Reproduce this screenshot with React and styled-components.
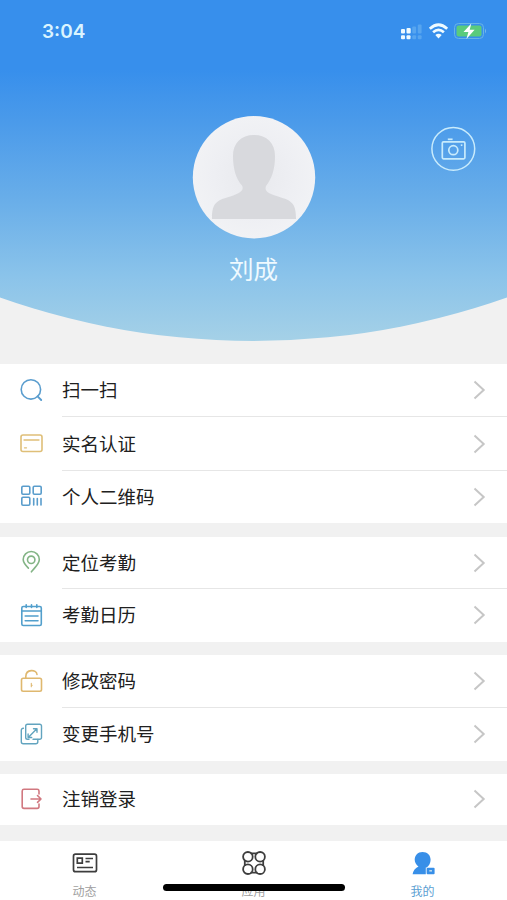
import React from "react";
import styled, { createGlobalStyle } from "styled-components";

const GlobalStyle = createGlobalStyle`
  * { box-sizing: border-box; }
  body {
    margin: 0;
    background: #f1f1f1;
    font-family: "Noto Sans CJK SC", "Noto Sans", sans-serif;
  }
`;

const Screen = styled.div`
  position: relative;
  display: flex;
  flex-direction: column;
  width: 507px;
  height: 900px;
  overflow: hidden;
  background: #f1f1f1;
`;

const Header = styled.header`
  position: relative;
  display: flex;
  flex-direction: column;
  align-items: center;
  height: 341px;
  flex: none;
  background: linear-gradient(#378fec 0, #378fec 70px, #4a9aea 120px, #69aee9 200px, #8ac3ea 275px, #a5d1e7 341px);
  clip-path: circle(760px at 50% -419px);
`;

const StatusBar = styled.div`
  display: flex;
  align-self: stretch;
  justify-content: space-between;
  align-items: center;
  height: 62px;
  padding: 0 20px 0 42px;
`;

const Time = styled.span`
  padding-top: 2px;
  font: 600 19px/24px Inter, sans-serif;
  letter-spacing: 0;
  color: #daf4ff;
`;

const StatusIcons = styled.svg`
  display: block;
  width: 86px;
  height: 20px;
`;

const Avatar = styled.svg`
  display: block;
  width: 124px;
  height: 124px;
  margin-top: 53px;
`;

const UserName = styled.div`
  margin-top: 13px;
  font-size: 24.5px;
  line-height: 34px;
  color: #effaff;
`;

const CameraButton = styled.button`
  position: absolute;
  top: 126px;
  right: 31px;
  width: 45px;
  height: 45px;
  padding: 0;
  border: 0;
  background: none;
  color: #c8ebfc;
  svg { display: block; }
`;

const Menu = styled.main`
  display: flex;
  flex-direction: column;
  gap: 13px;
  margin-top: 23px;
`;

const Group = styled.section`
  background: #fff;
  margin-bottom: ${(p) => p.$after || 0}px;
`;

const Row = styled.div`
  display: flex;
  align-items: center;
  height: ${(p) => p.$height || 53}px;
  padding-left: 19px;
`;

const RowIcon = styled.svg`
  width: 25px;
  height: 26px;
  flex: none;
  margin: 0 18px 2px 0;
  fill: none;
  stroke: ${(p) => p.$color};
  stroke-width: 1.6;
  stroke-linecap: round;
  stroke-linejoin: round;
`;

const RowBody = styled.div`
  display: flex;
  flex: 1;
  align-items: center;
  justify-content: space-between;
  align-self: stretch;
  padding-right: 21px;
  border-bottom: 1px solid ${(p) => (p.$last ? "transparent" : "#e6e6e6")};
`;

const Label = styled.span`
  padding-bottom: 2px;
  font-size: 18.5px;
  line-height: 26px;
  color: #202020;
`;

const Chevron = styled.svg`
  width: 13px;
  height: 20px;
  fill: none;
  stroke: #c6c6c6;
  stroke-width: 2;
`;

const TabBar = styled.nav`
  display: grid;
  grid-template-columns: repeat(3, 1fr);
  height: 59px;
  margin-top: auto;
  flex: none;
  background: #fff;
`;

const Tab = styled.div`
  display: flex;
  flex-direction: column;
  align-items: center;
  padding-top: 8px;
  color: ${(p) => (p.$active ? "#388fe8" : "#3d3d3d")};
  svg { display: block; width: 28px; height: 28px; }
`;

const TabLabel = styled.span`
  margin-top: 5px;
  font-size: 12px;
  line-height: 18px;
  color: ${(p) => (p.$active ? "#5ba0d2" : "#a0a0a0")};
`;

const HomeIndicator = styled.div`
  position: absolute;
  left: 163px;
  top: 884px;
  width: 182px;
  height: 7px;
  border-radius: 4px;
  background: #000;
`;

const icons = {
  search: (
    <>
      <circle cx="11.9" cy="12.4" r="9.7" />
      <path d="M18.6 19.3L22.2 23" strokeWidth="1.9" />
    </>
  ),
  card: (
    <>
      <rect x="2" y="5" width="21" height="16.5" rx="2" />
      <path d="M5 10H20M5.5 17.8H7.5" strokeWidth="1.3" />
    </>
  ),
  qr: (
    <>
      <rect x="2.8" y="3.3" width="8" height="8" rx="1.2" />
      <rect x="14.2" y="3.3" width="8" height="8" rx="1.2" />
      <rect x="2.8" y="14.3" width="8" height="8" rx="1.2" />
      <path d="M14.7 15.5V22M18.3 15.5V22M22 15.5V22" />
    </>
  ),
  pin: (
    <>
      <path d="M9.4 19.1C6.3 16 4.2 13.5 4.2 10.5A8 7.9 0 0 1 20.3 10.5C20.3 15.2 15.2 19 12.4 22.8" />
      <circle cx="12.2" cy="10.8" r="3.7" />
    </>
  ),
  calendar: (
    <>
      <rect x="2.8" y="4.5" width="19.5" height="19" rx="1.5" />
      <path d="M3 9H22M6.2 14H19M6.2 18.8H19M7.2 2.7V5.5M12.5 2.7V5.5M17.8 2.7V5.5" />
    </>
  ),
  lock: (
    <>
      <rect x="2.5" y="10.3" width="20" height="13" rx="1.7" />
      <path d="M6.8 10V8.4C7 .9 17.5 1.2 18 6.5" />
      <path d="M12.3 15.3V18.8M12.3 17.2H13.2" strokeWidth="1.1" />
    </>
  ),
  swap: (
    <>
      <path d="M10 18.2H8.5A1.8 1.8 0 0 1 6.7 16.4V5A1.8 1.8 0 0 1 8.5 3.2H20.7A1.8 1.8 0 0 1 22.5 5V16.4A1.8 1.8 0 0 1 20.7 18.2H14" strokeWidth="1.4" />
      <path d="M4.4 7.3A2 2 0 0 0 2.3 9.3V20.8A2 2 0 0 0 4.3 22.8H16.8A2 2 0 0 0 18.8 20.8V18.5" strokeWidth="1.4" />
      <path d="M9.5 16.2L17.6 8.1M14.5 7.7H18V11.2M9.1 12.9V16.5H12.7" strokeWidth="1.4" />
    </>
  ),
  logout: (
    <>
      <path d="M20 8V5A1.8 1.8 0 0 0 18.2 3.3H5A1.8 1.8 0 0 0 3.2 5V20.6A1.8 1.8 0 0 0 5 22.4H18.2A1.8 1.8 0 0 0 20 20.6V18" />
      <path d="M12 13H22M18.5 9.5L22 13L18.5 16.3" />
    </>
  ),
};

const groups = [
  {
    after: 1,
    rows: [
      { icon: "search", color: "#5a9dce", label: "扫一扫" },
      { icon: "card", color: "#dfbf78", label: "实名认证", height: 54 },
      { icon: "qr", color: "#5a9dcc", label: "个人二维码", height: 52 },
    ],
  },
  {
    rows: [
      { icon: "pin", color: "#83b485", label: "定位考勤", height: 52 },
      { icon: "calendar", color: "#529fcc", label: "考勤日历" },
    ],
  },
  {
    rows: [
      { icon: "lock", color: "#dfb86f", label: "修改密码" },
      { icon: "swap", color: "#62a4bf", label: "变更手机号" },
    ],
  },
  { rows: [{ icon: "logout", color: "#d17880", label: "注销登录", height: 51 }] },
];

function StatusGlyphs() {
  return (
    <StatusIcons viewBox="0 0 86 20">
      <g fill="#eefaff">
        <rect x="0" y="8" width="4" height="4.6" rx="1" />
        <rect x="5.5" y="7" width="4.2" height="5.6" rx="1" />
        <rect x="0" y="14.2" width="4" height="4" rx="1" />
        <rect x="5.5" y="14.2" width="4" height="4" rx="1" />
      </g>
      <g fill="#57a5ef">
        <rect x="11.3" y="5.5" width="3.8" height="7" rx="1" />
        <rect x="16.8" y="3.5" width="3.8" height="9" rx="1" />
        <rect x="11.3" y="14.2" width="3.8" height="4" rx="1" />
        <rect x="16.8" y="14.2" width="3.8" height="4" rx="1" />
      </g>
      <g fill="none" stroke="#effbff" strokeWidth="2.7">
        <path d="M28.8 7.7Q37.5-.2 46.2 7.7" />
        <path d="M32.1 11.3Q37.5 6.6 42.9 11.3" />
      </g>
      <path d="M34.3 14.1Q37.5 11.3 40.7 14.1L37.5 17.5Z" fill="#effbff" />
      <rect x="53.5" y="2.5" width="29" height="15" rx="4" fill="none" stroke="#68b4e6" />
      <rect x="55.5" y="4.5" width="25" height="11" rx="2" fill="#5acb7c" />
      <path d="M84 7.5Q86 10 84 12.5Z" fill="#76bce9" />
      <path d="M70.3 2.5L62.5 11H67.4L65.4 18L73.6 8.8H68.7Z" fill="#fff" />
    </StatusIcons>
  );
}

function Camera() {
  return (
    <svg width="45" height="45" viewBox="0 0 45 45" fill="none" stroke="currentColor" strokeWidth="1.7">
      <circle cx="22.3" cy="22.8" r="21.4" strokeWidth="1.5" />
      <rect x="11.3" y="15.8" width="22.6" height="17" rx="1.2" />
      <path d="M16.8 13.3H21.6" />
      <circle cx="22.3" cy="24.2" r="4.5" />
      <path d="M29.8 19.2H31.4" />
    </svg>
  );
}

function Portrait() {
  return (
    <Avatar viewBox="0 0 124 124">
      <defs>
        <radialGradient id="avatarFill">
          <stop offset="0" stopColor="#e8e9ed" />
          <stop offset="0.65" stopColor="#eeeff3" />
          <stop offset="1" stopColor="#f1f2f5" />
        </radialGradient>
      </defs>
      <circle cx="62" cy="62.3" r="61.2" fill="url(#avatarFill)" />
      <path fill="#d8d9dd" d="M62 20C49 20 41 28 41 41C41 54 44 64 50 70.5C53 76 46 79 35 82.5C23 86 20 90 20 104H104C104 90 101 86 89 82.5C77 79 72 77 74 71C80 63 83 54 83 41C83 28 75 20 62 20Z" />
    </Avatar>
  );
}

function NewsIcon() {
  return (
    <svg viewBox="0 0 28 28" fill="none" stroke="currentColor" strokeWidth="1.7">
      <rect x="2.5" y="5.2" width="23" height="17.5" rx="2" />
      <path d="M6.3 9.2H11.3V14.2H6.3ZM14.5 9.5H22M14.5 12.7H18.7M6 18.5H22" />
    </svg>
  );
}

function AppsIcon() {
  return (
    <svg viewBox="0 0 28 28" fill="none" stroke="currentColor" strokeWidth="1.8">
      <circle cx="7.9" cy="7.8" r="4.8" />
      <circle cx="20.1" cy="7.8" r="4.8" />
      <circle cx="7.9" cy="20.2" r="4.8" />
      <circle cx="20.1" cy="20.2" r="4.8" />
      <path d="M10.5 4.3H17.5M10.5 23.7H17.5M4.8 11V17M23.2 11V17" />
    </svg>
  );
}

function MeIcon() {
  return (
    <svg viewBox="0 0 28 28" fill="currentColor">
      <path d="M13.5 3C8.7 3 5.7 6.5 5.7 10.7C5.7 13.6 7.3 15.8 9.5 17.5C6 19.1 4 22 3.6 25.3H16.8V18.4H17.7C20.1 16.8 21.6 13.8 21.6 10.7C21.6 6.4 18.5 3 13.5 3Z" />
      <rect x="17.6" y="18.8" width="8" height="6.5" rx="1" />
      <rect x="20.3" y="21" width="2.7" height="1.6" fill="#b7d8ed" />
    </svg>
  );
}

function MenuRow({ item, last }) {
  return (
    <Row $height={item.height}>
      <RowIcon viewBox="0 0 25 26" $color={item.color}>{icons[item.icon]}</RowIcon>
      <RowBody $last={last}>
        <Label>{item.label}</Label>
        <Chevron viewBox="0 0 13 20"><path d="M1.5 1.5L10.7 10L1.5 18.5" /></Chevron>
      </RowBody>
    </Row>
  );
}

export default function App() {
  return (
    <>
      <GlobalStyle />
      <Screen>
        <Header>
          <StatusBar><Time>3:04</Time><StatusGlyphs /></StatusBar>
          <Portrait />
          <UserName>刘成</UserName>
          <CameraButton aria-label="更换头像"><Camera /></CameraButton>
        </Header>
        <Menu>
          {groups.map((group, index) => (
            <Group key={index} $after={group.after}>
              {group.rows.map((item, i) => (
                <MenuRow key={item.label} item={item} last={i === group.rows.length - 1} />
              ))}
            </Group>
          ))}
        </Menu>
        <TabBar>
          <Tab><NewsIcon /><TabLabel>动态</TabLabel></Tab>
          <Tab><AppsIcon /><TabLabel>应用</TabLabel></Tab>
          <Tab $active><MeIcon /><TabLabel $active>我的</TabLabel></Tab>
        </TabBar>
        <HomeIndicator />
      </Screen>
    </>
  );
}
